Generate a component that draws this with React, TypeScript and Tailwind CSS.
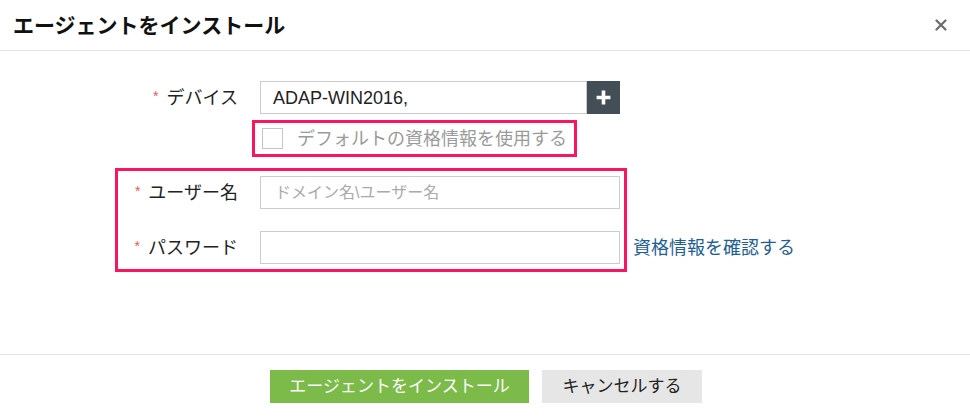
import React from 'react';

const Star = () => (
    <span className="mr-[8px] text-[14px] leading-none text-[#e85a5a] relative -top-[2px]">*</span>
);

const App: React.FC = () => {
    return (
        <div
            className="w-[970px] h-[417px] bg-white flex flex-col text-[#222]"
            style={{ fontFamily: "'Liberation Sans', 'Noto Sans CJK JP', sans-serif" }}
        >
            {/* Header */}
            <div className="h-[51px] shrink-0 flex items-center justify-between pl-[13px] pr-[22px] border-b border-[#e6e6e6]">
                <h1 className="text-[21px] font-bold leading-none text-[#111]">エージェントをインストール</h1>
                <button className="w-[14px] h-[14px] flex items-center justify-center">
                    <svg viewBox="0 0 12 12" className="w-[12px] h-[12px]">
                        <path d="M1.5 1.5 L10.5 10.5 M10.5 1.5 L1.5 10.5" stroke="#6b6b6b" strokeWidth="2.2" strokeLinecap="round" />
                    </svg>
                </button>
            </div>

            {/* Body */}
            <div className="h-[303px] shrink-0 pt-[30px] pl-[115px]">
                {/* Device */}
                <div className="flex items-center h-[33px]">
                    <label className="w-[145px] pr-[22px] flex items-center justify-end text-[18px] leading-none">
                        <Star />
                        デバイス
                    </label>
                    <div className="w-[327px] h-[33px] border border-[#cccccc] flex items-center px-[12px] text-[18px] leading-none text-[#222]">
                        ADAP-WIN2016,
                    </div>
                    <button className="w-[33px] h-[33px] bg-[#434e56] flex items-center justify-center">
                        <svg viewBox="0 0 16 16" className="w-[17px] h-[17px]">
                            <path d="M8 1.5 V14.5 M1.5 8 H14.5" stroke="#ffffff" strokeWidth="3.4" />
                        </svg>
                    </button>
                </div>

                {/* Use default credentials */}
                <div className="mt-[6px] ml-[137px] w-[325px] h-[37px] border-[3px] border-[#fb1460] flex items-center pl-[7px] gap-[14px]">
                    <span className="w-[21px] h-[21px] border border-[#c4c4c4] bg-white shrink-0" />
                    <span className="text-[18px] leading-none text-[#9a9a9a] whitespace-nowrap">デフォルトの資格情報を使用する</span>
                </div>

                {/* Credentials */}
                <div className="mt-[11px] flex items-end">
                    <div className="w-[512px] border-[3px] border-[#fb1460] pt-[5px] pb-[5px] pr-[4px] flex flex-col gap-[22px]">
                        <div className="flex items-center h-[33px]">
                            <label className="w-[142px] pr-[22px] flex items-center justify-end text-[18px] leading-none">
                                <Star />
                                ユーザー名
                            </label>
                            <div className="w-[360px] h-[33px] border border-[#cccccc] flex items-center px-[14px] text-[16px] leading-none text-[#aaaaaa] whitespace-nowrap">
                                ドメイン名\ユーザー名
                            </div>
                        </div>
                        <div className="flex items-center h-[33px]">
                            <label className="w-[142px] pr-[22px] flex items-center justify-end text-[18px] leading-none">
                                <Star />
                                パスワード
                            </label>
                            <div className="w-[360px] h-[33px] border border-[#cccccc]" />
                        </div>
                    </div>
                    <a className="ml-[6px] mb-[15px] text-[18px] leading-none text-[#1d5e96] whitespace-nowrap cursor-pointer">資格情報を確認する</a>
                </div>
            </div>

            {/* Footer */}
            <div className="flex-1 border-t border-[#e6e6e6] flex justify-center items-start pt-[15px] gap-[13px] pl-[2px]">
                <button className="w-[259px] h-[33px] bg-[#7cba4a] text-white text-[17px] leading-none flex items-center justify-center">
                    エージェントをインストール
                </button>
                <button className="w-[160px] h-[33px] bg-[#e6e6e6] text-[#222] text-[17px] leading-none flex items-center justify-center">
                    キャンセルする
                </button>
            </div>
        </div>
    );
};

export default App;
